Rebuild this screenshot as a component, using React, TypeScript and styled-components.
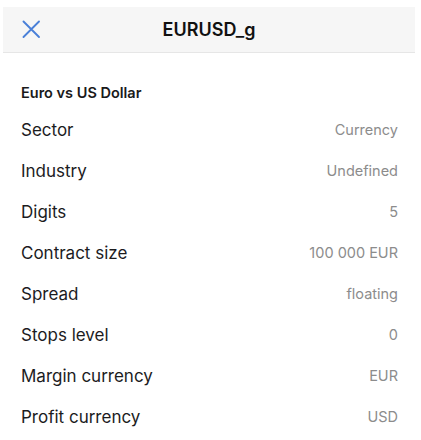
import React from 'react';
import styled, { createGlobalStyle } from 'styled-components';

const GlobalStyle = createGlobalStyle`
  html, body {
    margin: 0;
    padding: 0;
    background: #ffffff;
  }
  body {
    font-family: Inter, 'Liberation Sans', sans-serif;
    -webkit-font-smoothing: antialiased;
  }
`;

type SpecType = {
  label: string;
  value: string;
};

const specs: SpecType[] = [
  { label: 'Sector', value: 'Currency' },
  { label: 'Industry', value: 'Undefined' },
  { label: 'Digits', value: '5' },
  { label: 'Contract size', value: '100 000 EUR' },
  { label: 'Spread', value: 'floating' },
  { label: 'Stops level', value: '0' },
  { label: 'Margin currency', value: 'EUR' },
  { label: 'Profit currency', value: 'USD' },
];

const Screen = styled.div`
  width: 421px;
  height: 440px;
  padding-top: 7px;
  box-sizing: border-box;
  overflow: hidden;
`;

const TopBar = styled.header`
  position: relative;
  margin: 0 6px 0 3px;
  height: 46px;
  display: flex;
  align-items: center;
  justify-content: center;
  background: #f6f6f6;
  border-bottom: 1px solid #e6e6e6;
  box-sizing: border-box;
`;

const CloseButton = styled.button`
  position: absolute;
  left: 19px;
  top: 13px;
  width: 19px;
  height: 19px;
  padding: 0;
  border: none;
  background: transparent;
  display: flex;
  align-items: center;
  justify-content: center;
  cursor: pointer;
`;

const Title = styled.h1`
  margin: 0;
  font-size: 18px;
  font-weight: 600;
  color: #111111;
  letter-spacing: 0;
`;

const Body = styled.section`
  padding: 31px 23px 0 21px;
`;

const Subtitle = styled.h2`
  margin: 0 0 7px;
  font-size: 14.5px;
  line-height: 18px;
  font-weight: 600;
  color: #1a1a1a;
`;

const SpecList = styled.ul`
  list-style: none;
  margin: 0;
  padding: 0;
`;

const SpecRow = styled.li`
  height: 41px;
  display: flex;
  align-items: center;
  justify-content: space-between;
`;

const Label = styled.span`
  font-size: 17px;
  color: #1c1c1e;
`;

const Value = styled.span`
  font-size: 14.5px;
  color: #8c8c8c;
`;

const CloseIcon = () => (
  <svg width="19" height="19" viewBox="0 0 19 19" fill="none">
    <path
      d="M1.5 1.5 L17 17 M17 1.5 L1.5 17"
      stroke="#4a80d8"
      strokeWidth="1.9"
      strokeLinecap="round"
    />
  </svg>
);

const App = () => {
  return (
    <Screen>
      <GlobalStyle />
      <TopBar>
        <CloseButton aria-label="Close">
          <CloseIcon />
        </CloseButton>
        <Title>EURUSD_g</Title>
      </TopBar>
      <Body>
        <Subtitle>Euro vs US Dollar</Subtitle>
        <SpecList>
          {specs.map((spec) => (
            <SpecRow key={spec.label}>
              <Label>{spec.label}</Label>
              <Value>{spec.value}</Value>
            </SpecRow>
          ))}
        </SpecList>
      </Body>
    </Screen>
  );
};

export default App;
